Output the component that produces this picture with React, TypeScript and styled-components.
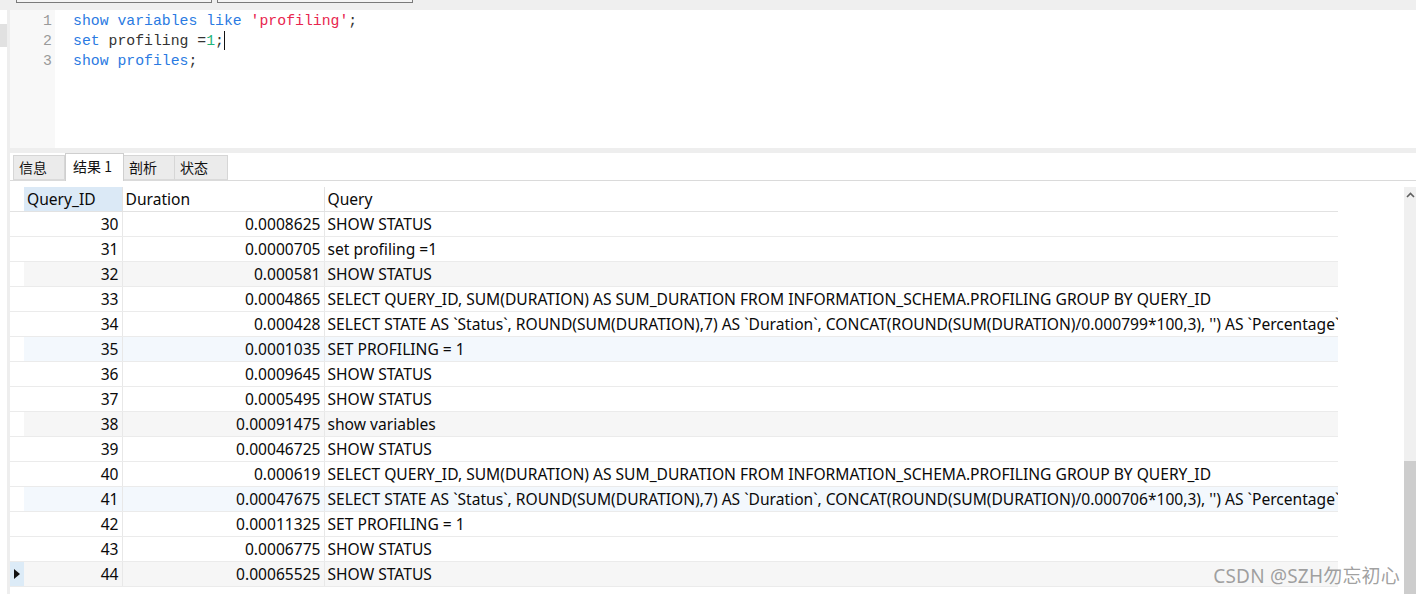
import React from "react";
import styled, { createGlobalStyle } from "styled-components";

const GlobalStyle = createGlobalStyle`
  html, body { margin: 0; padding: 0; background: #ffffff; overflow: hidden; }
  #root { width: 1416px; height: 594px; }
`;

const Page = styled.div`
  width: 1416px;
  height: 594px;
  display: flex;
  flex-direction: column;
  overflow: hidden;
  position: relative;
  background: #ffffff;
  font-family: "Noto Sans", "Noto Sans CJK SC", sans-serif;
`;

const TopBar = styled.div`
  height: 10px;
  flex: none;
  background: #efefef;
  display: flex;
  align-items: flex-start;
  gap: 5px;
  padding-left: 16px;
`;

const ToolButton = styled.div`
  width: 194px;
  height: 2px;
  border: 1px solid #7a7a7a;
  border-top: none;
  background: #f4f4f4;
`;

const Main = styled.div`
  flex: 1;
  display: flex;
  min-height: 0;
`;

const LeftRail = styled.div`
  width: 7px;
  flex: none;
  background: #ffffff;
  padding-top: 14px;
`;

const RailMarker = styled.div`
  height: 23px;
  background: #e1e1e1;
`;

const RailEdge = styled.div`
  width: 3px;
  flex: none;
  background: #eeeeee;
`;

const Content = styled.div`
  flex: 1;
  display: flex;
  flex-direction: column;
  min-width: 0;
`;

const Editor = styled.div`
  height: 138px;
  flex: none;
  display: flex;
  background: #ffffff;
  font-family: "Liberation Mono", "DejaVu Sans Mono", monospace;
  font-size: 14.8px;
  line-height: 20px;
`;

const Gutter = styled.div`
  width: 45px;
  flex: none;
  background: #f8f8f8;
  color: #9a9a9a;
  text-align: right;
  padding: 1px 3px 0 0;
  box-sizing: border-box;
`;

const Code = styled.div`
  flex: 1;
  padding: 1px 0 0 18px;
  color: #333333;
  white-space: pre;
`;

const Line = styled.div`
  height: 20px;
`;

const Tok = styled.span<{ $kind: "kw" | "str" | "num" | "plain" }>`
  color: ${(p) =>
    p.$kind === "kw"
      ? "#2a7ae2"
      : p.$kind === "str"
      ? "#e8254e"
      : p.$kind === "num"
      ? "#1fb47a"
      : "#333333"};
`;

const Caret = styled.span`
  display: inline-block;
  width: 0;
  height: 19px;
  border-left: 1px solid #111;
  vertical-align: -5px;
`;

const Separator = styled.div`
  height: 5px;
  flex: none;
  background: #eeeeee;
`;

const TabBar = styled.div`
  height: 27px;
  flex: none;
  display: flex;
  align-items: flex-end;
  padding-left: 3px;
  border-bottom: 1px solid #dadada;
  background: #ffffff;
`;

const Tab = styled.div<{ $active?: boolean; $w: number }>`
  width: ${(p) => p.$w}px;
  height: ${(p) => (p.$active ? 28 : 25)}px;
  box-sizing: border-box;
  margin-bottom: ${(p) => (p.$active ? -1 : 0)}px;
  border: 1px solid ${(p) => (p.$active ? "#cfcfcf" : "#d6d6d6")};
  border-bottom: ${(p) => (p.$active ? "none" : "1px solid #dadada")};
  border-left: ${(p) => (p.$active ? "1px solid #cfcfcf" : "none")};
  background: ${(p) => (p.$active ? "#ffffff" : "#ebebeb")};
  color: #111;
  font-family: "Noto Sans CJK SC", "Noto Sans", sans-serif;
  font-size: 14px;
  line-height: ${(p) => (p.$active ? 24 : 23)}px;
  padding-left: ${(p) => (p.$active ? 7 : 5)}px;
  &:first-child {
    border-left: 1px solid #d6d6d6;
  }
`;

const GridArea = styled.div`
  flex: 1;
  display: flex;
  padding-top: 6px;
  min-height: 0;
`;

const TableWrap = styled.div`
  width: 1328px;
  flex: none;
  overflow: hidden;
`;

const Table = styled.table`
  border-collapse: collapse;
  table-layout: fixed;
  width: 1328px;
  font-family: "Noto Sans", "Noto Sans CJK SC", sans-serif;
  font-size: 15.6px;
  color: #0a0a0a;
`;

const Col = styled.col<{ $w: number }>`
  width: ${(p) => p.$w}px;
`;

const HeadCell = styled.th<{ $sel?: boolean }>`
  height: 24px;
  padding: 0 0 0 3px;
  text-align: left;
  font-weight: normal;
  background: ${(p) => (p.$sel ? "#dbe9f6" : "#ffffff")};
  border-right: 1px solid #e2e2e2;
  border-bottom: 1px solid #e2e2e2;
  white-space: nowrap;
  overflow: hidden;
  line-height: 24px;
  &:last-child {
    border-right: 1px solid #d6d6d6;
  }
`;

const IndHead = styled.th`
  padding: 0;
  background: #ffffff;
  border-bottom: 1px solid #e2e2e2;
`;

const Row = styled.tr<{ $bg: string }>`
  & > td:not(:first-child) {
    background: ${(p) => p.$bg};
  }
`;

const IndCell = styled.td<{ $cur?: boolean }>`
  height: 24px;
  padding: 0;
  background: ${(p) => (p.$cur ? "#dcebf7" : "#ffffff")};
  border-bottom: 1px solid #ebebeb;
`;

const Arrow = styled.div`
  width: 0;
  height: 0;
  margin-left: 4px;
  border-top: 5px solid transparent;
  border-bottom: 5px solid transparent;
  border-left: 6px solid #111;
`;

const Cell = styled.td<{ $right?: boolean }>`
  height: 24px;
  padding: ${(p) => (p.$right ? "0 3px 0 0" : "0 0 0 3px")};
  text-align: ${(p) => (p.$right ? "right" : "left")};
  border-right: 1px solid #e8e8e8;
  border-bottom: 1px solid #ebebeb;
  white-space: nowrap;
  overflow: hidden;
  line-height: 24px;
  &:last-child {
    border-right: 1px solid #e4e4e4;
  }
`;

const Spacer = styled.div`
  flex: 1;
`;

const Scrollbar = styled.div`
  width: 12px;
  flex: none;
  background: #f0f0f0;
  display: flex;
  flex-direction: column;
`;

const ScrollUp = styled.div`
  height: 16px;
  display: flex;
  justify-content: center;
  align-items: center;
`;

const ScrollTrack = styled.div`
  flex: 1;
  display: flex;
  flex-direction: column;
  justify-content: flex-end;
`;

const Thumb = styled.div`
  height: 133px;
  background: #cdcdcd;
`;

const Watermark = styled.div`
  position: absolute;
  right: 16px;
  bottom: 5px;
  font-family: "Noto Sans", "Noto Sans CJK SC", sans-serif;
  font-size: 19px;
  color: rgba(130, 130, 130, 0.75);
  letter-spacing: 0.2px;
`;

const rows: [number, string, string][] = [
  [30, "0.0008625", "SHOW STATUS"],
  [31, "0.0000705", "set profiling =1"],
  [32, "0.000581", "SHOW STATUS"],
  [33, "0.0004865", "SELECT QUERY_ID, SUM(DURATION) AS SUM_DURATION FROM INFORMATION_SCHEMA.PROFILING GROUP BY QUERY_ID"],
  [34, "0.000428", "SELECT STATE AS `Status`, ROUND(SUM(DURATION),7) AS `Duration`, CONCAT(ROUND(SUM(DURATION)/0.000799*100,3), '') AS `Percentage` FROM INFORMATION_SCHEMA.PROFILING WHERE QUERY_ID=33 GROUP BY SEQ ORDER BY SEQ"],
  [35, "0.0001035", "SET PROFILING = 1"],
  [36, "0.0009645", "SHOW STATUS"],
  [37, "0.0005495", "SHOW STATUS"],
  [38, "0.00091475", "show variables"],
  [39, "0.00046725", "SHOW STATUS"],
  [40, "0.000619", "SELECT QUERY_ID, SUM(DURATION) AS SUM_DURATION FROM INFORMATION_SCHEMA.PROFILING GROUP BY QUERY_ID"],
  [41, "0.00047675", "SELECT STATE AS `Status`, ROUND(SUM(DURATION),7) AS `Duration`, CONCAT(ROUND(SUM(DURATION)/0.000706*100,3), '') AS `Percentage` FROM INFORMATION_SCHEMA.PROFILING WHERE QUERY_ID=40 GROUP BY SEQ ORDER BY SEQ"],
  [42, "0.00011325", "SET PROFILING = 1"],
  [43, "0.0006775", "SHOW STATUS"],
  [44, "0.00065525", "SHOW STATUS"],
];

const rowBg = (i: number) => {
  if (i % 3 !== 2) return "#ffffff";
  return i % 6 === 5 ? "#f3f8fd" : "#f6f6f6";
};

export default function App() {
  return (
    <>
      <GlobalStyle />
      <Page>
        <TopBar>
          <ToolButton />
          <ToolButton />
        </TopBar>
        <Main>
          <LeftRail>
            <RailMarker />
          </LeftRail>
          <RailEdge />
          <Content>
            <Editor>
              <Gutter>
                <Line>1</Line>
                <Line>2</Line>
                <Line>3</Line>
              </Gutter>
              <Code>
                <Line>
                  <Tok $kind="kw">show variables like</Tok> <Tok $kind="str">'profiling'</Tok>
                  <Tok $kind="plain">;</Tok>
                </Line>
                <Line>
                  <Tok $kind="kw">set</Tok> <Tok $kind="plain">profiling =</Tok>
                  <Tok $kind="num">1</Tok>
                  <Tok $kind="plain">;</Tok>
                  <Caret />
                </Line>
                <Line>
                  <Tok $kind="kw">show profiles</Tok>
                  <Tok $kind="plain">;</Tok>
                </Line>
              </Code>
            </Editor>
            <Separator />
            <TabBar>
              <Tab $w={52}>信息</Tab>
              <Tab $w={59} $active>
                结果 1
              </Tab>
              <Tab $w={51}>剖析</Tab>
              <Tab $w={53}>状态</Tab>
            </TabBar>
            <GridArea>
              <TableWrap>
                <Table>
                  <colgroup>
                    <Col $w={14} />
                    <Col $w={98} />
                    <Col $w={202} />
                    <Col $w={1014} />
                  </colgroup>
                  <thead>
                    <tr>
                      <IndHead />
                      <HeadCell $sel>Query_ID</HeadCell>
                      <HeadCell>Duration</HeadCell>
                      <HeadCell>Query</HeadCell>
                    </tr>
                  </thead>
                  <tbody>
                    {rows.map(([id, dur, q], i) => (
                      <Row key={id} $bg={rowBg(i)}>
                        <IndCell $cur={i === rows.length - 1}>
                          {i === rows.length - 1 && <Arrow />}
                        </IndCell>
                        <Cell $right>{id}</Cell>
                        <Cell $right>{dur}</Cell>
                        <Cell>{q}</Cell>
                      </Row>
                    ))}
                  </tbody>
                </Table>
              </TableWrap>
              <Spacer />
              <Scrollbar>
                <ScrollUp>
                  <svg width="9" height="6" viewBox="0 0 9 6">
                    <path d="M1 5 L4.5 1.5 L8 5" fill="none" stroke="#606060" strokeWidth="1.6" />
                  </svg>
                </ScrollUp>
                <ScrollTrack>
                  <Thumb />
                </ScrollTrack>
              </Scrollbar>
            </GridArea>
          </Content>
        </Main>
        <Watermark>CSDN @SZH勿忘初心</Watermark>
      </Page>
    </>
  );
}
